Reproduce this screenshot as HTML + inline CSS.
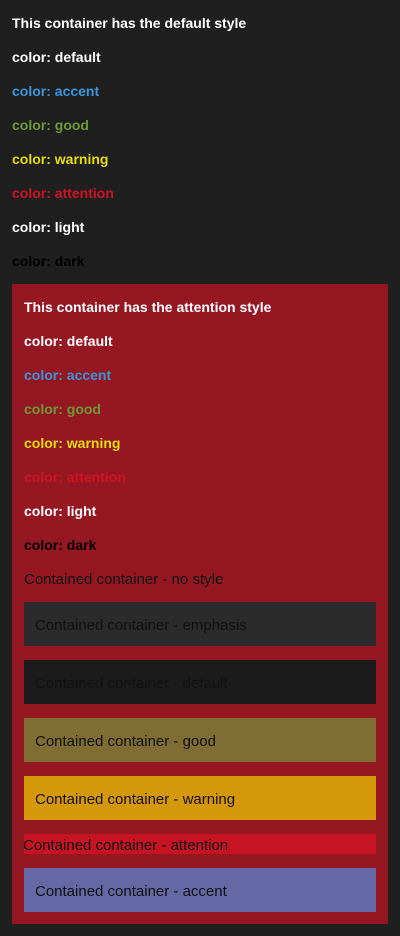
<!DOCTYPE html>
<html><head><meta charset="utf-8"><style>
html,body{margin:0;padding:0}
body{width:400px;height:936px;background:#1f1f1f;position:relative;overflow:hidden;font-family:"Liberation Sans",sans-serif;font-size:14px;font-weight:bold}
.t{position:absolute;line-height:20px;white-space:nowrap}
.box{position:absolute;left:24px;width:352px}
.bt{position:absolute;line-height:20px;white-space:nowrap;font-weight:normal;font-size:15px;color:#111}
</style></head><body>
<div class="t" style="left:12px;top:13px;color:#fff">This container has the default style</div>
<div class="t" style="left:12px;top:47px;color:#fff">color: default</div>
<div class="t" style="left:12px;top:81px;color:#3a96dd">color: accent</div>
<div class="t" style="left:12px;top:115px;color:#6e9a35">color: good</div>
<div class="t" style="left:12px;top:149px;color:#e5dc09">color: warning</div>
<div class="t" style="left:12px;top:183px;color:#d11324">color: attention</div>
<div class="t" style="left:12px;top:217px;color:#fff">color: light</div>
<div class="t" style="left:12px;top:251px;color:#000">color: dark</div>

<div style="position:absolute;left:12px;top:284px;width:376px;height:640px;background:#951722"></div>
<div class="t" style="left:24px;top:297px;color:#fff">This container has the attention style</div>
<div class="t" style="left:24px;top:331px;color:#fff">color: default</div>
<div class="t" style="left:24px;top:365px;color:#3a96dd">color: accent</div>
<div class="t" style="left:24px;top:399px;color:#6e9a35">color: good</div>
<div class="t" style="left:24px;top:433px;color:#e5dc09">color: warning</div>
<div class="t" style="left:24px;top:467px;color:#d11324">color: attention</div>
<div class="t" style="left:24px;top:501px;color:#fff">color: light</div>
<div class="t" style="left:24px;top:535px;color:#000">color: dark</div>
<div class="bt" style="left:24px;top:570px">Contained container - no style</div>

<div class="box" style="top:602px;height:44px;background:#2b2b2b"></div>
<div class="bt" style="left:35px;top:616px">Contained container - emphasis</div>
<div class="box" style="top:660px;height:44px;background:#1b1b1b"></div>
<div class="bt" style="left:35px;top:674px">Contained container - default</div>
<div class="box" style="top:718px;height:44px;background:#7f6d33"></div>
<div class="bt" style="left:35px;top:732px">Contained container - good</div>
<div class="box" style="top:776px;height:44px;background:#d5970c"></div>
<div class="bt" style="left:35px;top:790px">Contained container - warning</div>
<div class="box" style="top:834px;height:20px;background:#c71424"></div>
<div class="bt" style="left:23px;top:836px">Contained container - attention</div>
<div class="box" style="top:868px;height:44px;background:#6469a6"></div>
<div class="bt" style="left:35px;top:882px">Contained container - accent</div>
</body></html>
